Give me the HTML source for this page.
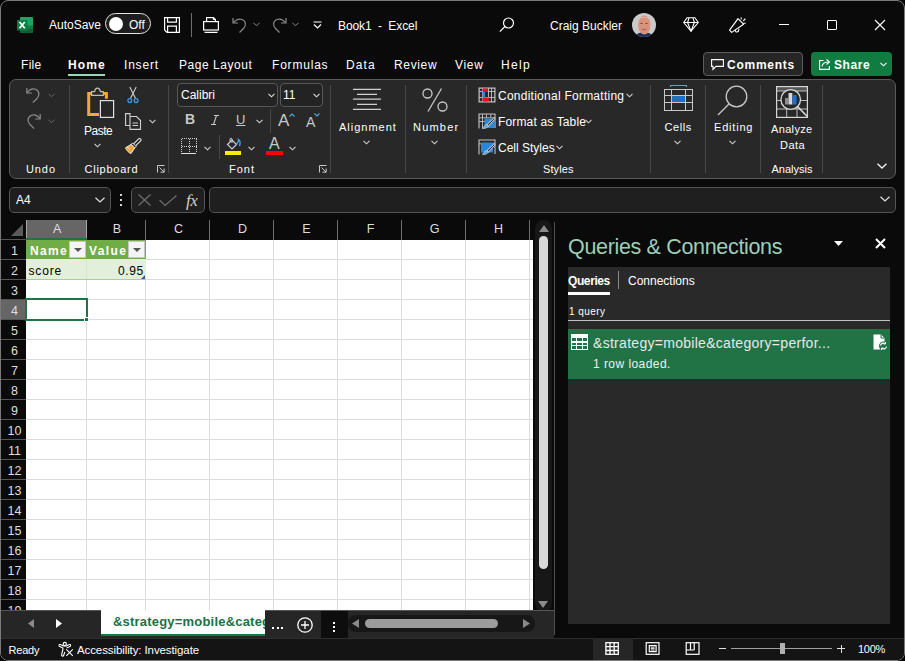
<!DOCTYPE html>
<html><head><meta charset="utf-8">
<style>
*{margin:0;padding:0;box-sizing:border-box}
html,body{width:905px;height:661px;overflow:hidden;background:#000}
body{font-family:"Liberation Sans",sans-serif;color:#fff;position:relative}
.a{position:absolute;white-space:nowrap}
#win{position:absolute;left:0;top:0;width:905px;height:661px;background:#0a0a0a;border:1px solid #7a7a7a;border-radius:8px;overflow:hidden}
.t12{font-size:12px}
.t11{font-size:11px}
.sep{top:85px;width:1px;height:88px;background:#484848}
.hdr{font-size:12.5px;color:#dedede;text-align:center}
.flt{width:17px;height:17px;background:#f4f4f4;border:1px solid #c6c6c6}
.flt::after{content:"";position:absolute;left:4px;top:6px;border-left:4px solid transparent;border-right:4px solid transparent;border-top:4px solid #555}
svg{position:absolute;overflow:visible}
</style></head><body>
<div id="win"><div id="in" style="position:absolute;left:-1px;top:-1px;width:905px;height:661px">
<!-- TITLE BAR -->
<svg style="left:17px;top:17px" width="16" height="16" viewBox="0 0 16 16">
  <rect x="3" y="0" width="13" height="16" rx="1" fill="#21a366"/>
  <rect x="3" y="8.5" width="13" height="7.5" fill="#107c41"/>
  <rect x="3" y="12" width="13" height="4" fill="#185c37"/>
  <rect x="0" y="3" width="10.5" height="10.5" rx="0.8" fill="#107c41"/>
  <path d="M2.5 5 L7.8 11.3 M7.8 5 L2.5 11.3" stroke="#fff" stroke-width="1.7"/>
</svg>
<div class="a t12" style="left:49px;top:18px;color:#fff">AutoSave</div>
<div class="a" style="left:105px;top:13px;width:46px;height:21px;border:1.5px solid #e6e6e6;border-radius:11px;background:#1e1e1e"></div>
<div class="a" style="left:109px;top:17px;width:14px;height:14px;border-radius:50%;background:#fff"></div>
<div class="a t12" style="left:129px;top:18px">Off</div>

<!-- save icon -->
<svg style="left:164px;top:17px" width="16" height="16" viewBox="0 0 16 16" fill="none" stroke="#fff" stroke-width="1.2">
  <path d="M0.6 0.6 H15.4 V15.4 H3 L0.6 13 Z"/>
  <path d="M3.6 0.6 V5.2 H12.4 V0.6"/>
  <path d="M3.6 15.4 V9.2 H12.4 V15.4"/>
</svg>
<div class="a" style="left:191px;top:13px;width:1px;height:24px;background:#6e6e6e"></div>
<!-- open/print icon -->
<svg style="left:203px;top:17px" width="16" height="16" viewBox="0 0 16 16" fill="none" stroke="#fff" stroke-width="1.2">
  <path d="M3.6 4.6 V0.6 H10.5 L12.4 2.5 V4.6"/>
  <path d="M10.5 0.6 V2.5 H12.4"/>
  <rect x="0.6" y="4.6" width="14.8" height="8.4"/>
  <path d="M1.5 15.4 H14.5"/>
</svg>
<!-- undo -->
<svg style="left:232px;top:17px" width="16" height="16" viewBox="0 0 16 16" fill="none" stroke="#8a8a8a" stroke-width="1.2">
  <path d="M1 1 V6 H6"/><path d="M1.3 5.7 C4 2.5 7 1.5 10 2.5 C14 4 14.5 8.5 11.5 11.5 L7.5 15.5"/>
</svg>
<svg style="left:253px;top:22px" width="7" height="5" viewBox="0 0 7 5" fill="none" stroke="#8a8a8a" stroke-width="1"><path d="M0.5 0.8 L3.5 3.8 L6.5 0.8"/></svg>
<!-- redo -->
<svg style="left:271px;top:17px" width="16" height="16" viewBox="0 0 16 16" fill="none" stroke="#8a8a8a" stroke-width="1.2">
  <path d="M15 1 V6 H10"/><path d="M14.7 5.7 C12 2.5 9 1.5 6 2.5 C2 4 1.5 8.5 4.5 11.5 L8.5 15.5"/>
</svg>
<svg style="left:292px;top:22px" width="7" height="5" viewBox="0 0 7 5" fill="none" stroke="#8a8a8a" stroke-width="1"><path d="M0.5 0.8 L3.5 3.8 L6.5 0.8"/></svg>
<!-- customize QAT -->
<svg style="left:313px;top:21px" width="9" height="8" viewBox="0 0 9 8" fill="none" stroke="#fff" stroke-width="1.2"><path d="M0.5 1 H8.5"/><path d="M1 3.5 L4.5 7 L8 3.5"/></svg>
<div class="a t12" style="left:338px;top:19px;letter-spacing:-0.1px">Book1&nbsp; - &nbsp;Excel</div>
<!-- search -->
<svg style="left:499px;top:17px" width="16" height="16" viewBox="0 0 16 16" fill="none" stroke="#fff" stroke-width="1.2">
  <circle cx="9.5" cy="6" r="5"/><path d="M6 9.5 L0.8 14.7"/>
</svg>
<div class="a t12" style="left:550px;top:19px">Craig Buckler</div>
<!-- avatar -->
<svg style="left:632px;top:13px" width="24" height="24" viewBox="0 0 24 24">
  <defs><clipPath id="av"><circle cx="12" cy="12" r="12"/></clipPath></defs>
  <g clip-path="url(#av)">
  <rect width="24" height="24" fill="#c9c9c9"/>
  <path d="M3 24 C5 20 8 19.5 12 19.5 C16 19.5 19 20 21 24 Z" fill="#1c2a5a"/>
  <ellipse cx="12.3" cy="12" rx="6.2" ry="9.5" fill="#d8937f"/>
  <path d="M7 7 C8 3.5 16 3.5 18 7" stroke="#e8b5a5" stroke-width="1" fill="none"/>
  <path d="M8.5 10.5 h2 M13.5 10.5 h2" stroke="#7a3a30" stroke-width="1"/>
  <path d="M10 16 C11 17 13.5 17 14.5 16" stroke="#9a4a40" stroke-width="0.8" fill="none"/>
  </g>
</svg>
<!-- diamond -->
<svg style="left:683px;top:17px" width="16" height="15" viewBox="0 0 16 15" fill="none" stroke="#fff" stroke-width="1.1" stroke-linejoin="round">
  <path d="M4 0.8 H12 L15.3 5.5 L8 14.2 L0.7 5.5 Z"/>
  <path d="M0.7 5.5 H15.3"/>
  <path d="M6 0.8 L4.6 5.5 L8 14.2 L11.4 5.5 L10 0.8"/>
</svg>
<!-- megaphone -->
<svg style="left:729px;top:17px" width="17" height="17" viewBox="0 0 17 17" fill="none" stroke="#fff" stroke-width="1.15" stroke-linejoin="round" stroke-linecap="round">
  <path d="M9 1.6 L14.6 7.2 L2.6 15.4 L0.6 13.2 Z"/>
  <path d="M6.2 13.3 C6.3 15.6 9.6 15.8 10 12.2"/>
  <path d="M12.2 0.8 V2 M14.6 3.6 L16 2 M14.8 6.2 H16.2"/>
</svg>
<!-- window controls -->
<div class="a" style="left:779px;top:24px;width:10px;height:1px;background:#fff"></div>
<div class="a" style="left:827px;top:20px;width:10px;height:10px;border:1px solid #fff;border-radius:1px"></div>
<svg style="left:875px;top:20px" width="10" height="10" viewBox="0 0 10 10" fill="none" stroke="#fff" stroke-width="1.1"><path d="M0 0 L10 10 M10 0 L0 10"/></svg>

<!-- MENU TABS -->
<div class="a t12" style="left:21px;top:58px;letter-spacing:0.3px">File</div>
<div class="a t12" style="left:68px;top:58px;font-weight:bold;letter-spacing:1.1px">Home</div>
<div class="a" style="left:68px;top:74px;width:37px;height:2px;background:#9ad8b3"></div>
<div class="a t12" style="left:124px;top:58px;letter-spacing:0.8px">Insert</div>
<div class="a t12" style="left:179px;top:58px;letter-spacing:0.55px">Page Layout</div>
<div class="a t12" style="left:272px;top:58px;letter-spacing:0.8px">Formulas</div>
<div class="a t12" style="left:346px;top:58px;letter-spacing:1.1px">Data</div>
<div class="a t12" style="left:394px;top:58px;letter-spacing:0.65px">Review</div>
<div class="a t12" style="left:455px;top:58px;letter-spacing:0.7px">View</div>
<div class="a t12" style="left:501px;top:58px;letter-spacing:1.3px">Help</div>
<!-- comments -->
<div class="a" style="left:703px;top:52px;width:100px;height:24px;border:1px solid #5c5c5c;border-radius:4px;background:#262626"></div>
<svg style="left:711px;top:59px" width="13" height="11" viewBox="0 0 13 11" fill="none" stroke="#fff" stroke-width="1.1"><path d="M0.6 0.6 H12.4 V7.4 H5 L2 10.4 V7.4 H0.6 Z"/></svg>
<div class="a t12" style="left:727px;top:58px;font-weight:bold;letter-spacing:0.75px">Comments</div>
<!-- share -->
<div class="a" style="left:811px;top:52px;width:81px;height:24px;border-radius:4px;background:#107c41"></div>
<svg style="left:819px;top:58px" width="12" height="12" viewBox="0 0 12 12" fill="none" stroke="#fff" stroke-width="1.1"><path d="M4.5 2.5 H0.6 V11.4 H10.4 V8"/><path d="M3 8.5 C3.5 5 6 4 9.5 4"/><path d="M7.5 1.5 L10.5 4 L7.5 6.5"/></svg>
<div class="a t12" style="left:834px;top:58px;font-weight:bold;letter-spacing:0.6px">Share</div>
<svg style="left:880px;top:62px" width="7" height="5" viewBox="0 0 7 5" fill="none" stroke="#fff" stroke-width="1.1"><path d="M0.5 0.8 L3.5 3.8 L6.5 0.8"/></svg>

<!-- RIBBON -->
<div class="a" style="left:9px;top:79px;width:887px;height:100px;border:1px solid #5a5a5a;border-radius:7px;background:#282828"></div>
<!-- separators -->
<div class="a sep" style="left:69px"></div>
<div class="a sep" style="left:168px"></div>
<div class="a sep" style="left:330px"></div>
<div class="a sep" style="left:405px"></div>
<div class="a sep" style="left:466px"></div>
<div class="a sep" style="left:650px"></div>
<div class="a sep" style="left:705px"></div>
<div class="a sep" style="left:760px"></div>
<div class="a sep" style="left:822px"></div>
<!-- group labels -->
<div class="a t11" style="left:26px;top:163px;letter-spacing:0.9px">Undo</div>
<div class="a t11" style="left:84.5px;top:163px;letter-spacing:0.75px">Clipboard</div>
<div class="a t11" style="left:229px;top:163px;letter-spacing:1px">Font</div>
<div class="a t11" style="left:543px;top:163px;letter-spacing:0.1px">Styles</div>
<div class="a t11" style="left:771.5px;top:163px">Analysis</div>

<!-- undo group -->
<svg style="left:26px;top:87px" width="15" height="16" viewBox="0 0 15 16" fill="none" stroke="#8c8c8c" stroke-width="1.2">
  <path d="M0.8 1 V6 H5.8"/><path d="M1.1 5.7 C3.5 2.5 6.5 1.3 9.5 2.3 C13.5 3.8 14 8.5 11 11.5 L6.8 15.6"/>
</svg>
<svg style="left:48px;top:93px" width="7" height="5" viewBox="0 0 7 5" fill="none" stroke="#6a6a6a" stroke-width="1"><path d="M0.5 0.8 L3.5 3.8 L6.5 0.8"/></svg>
<svg style="left:26px;top:113px" width="15" height="16" viewBox="0 0 15 16" fill="none" stroke="#8c8c8c" stroke-width="1.2">
  <path d="M14.2 1 V6 H9.2"/><path d="M13.9 5.7 C11.5 2.5 8.5 1.3 5.5 2.3 C1.5 3.8 1 8.5 4 11.5 L8.2 15.6"/>
</svg>
<svg style="left:48px;top:119px" width="7" height="5" viewBox="0 0 7 5" fill="none" stroke="#6a6a6a" stroke-width="1"><path d="M0.5 0.8 L3.5 3.8 L6.5 0.8"/></svg>
<!-- clipboard -->
<svg style="left:86px;top:87px" width="30" height="32" viewBox="0 0 30 32" fill="none">
  <path d="M13 27.4 H2.7 V6.5 H20.4 V11.7" stroke="#f2a73b" stroke-width="3"/>
  <path d="M5.6 8.3 V4.6 H8.6 C9 2 10 1.2 11.5 1.2 C13 1.2 14 2 14.4 4.6 H17.3 V8.3 Z" stroke="#bdbdbd" stroke-width="1.2" fill="#282828"/>
  <rect x="14.4" y="13.6" width="13.2" height="16.8" stroke="#e0e0e0" stroke-width="1.2" fill="#282828"/>
</svg>
<div class="a t11" style="left:84px;top:124px;font-size:12px;letter-spacing:-0.5px">Paste</div>
<svg style="left:94px;top:143px" width="7" height="5" viewBox="0 0 7 5" fill="none" stroke="#d0d0d0" stroke-width="1.1"><path d="M0.5 0.8 L3.5 3.8 L6.5 0.8"/></svg>
<!-- scissors -->
<svg style="left:127px;top:86px" width="12" height="17" viewBox="0 0 12 17" fill="none" stroke-width="1.1">
  <path d="M2.8 1 L8.6 12.5 M9.2 1 L3.4 12.5" stroke="#d0d0d0"/>
  <circle cx="2.8" cy="14.6" r="1.9" stroke="#3a9be0" stroke-width="1.3"/><circle cx="9.1" cy="14.6" r="1.9" stroke="#3a9be0" stroke-width="1.3"/>
</svg>
<!-- copy -->
<svg style="left:125px;top:113px" width="17" height="17" viewBox="0 0 17 17" fill="none" stroke="#d0d0d0" stroke-width="1.1">
  <path d="M5 3 V0.6 H0.6 V12.5 H5"/>
  <path d="M5 3.5 H11.5 L15.5 7.5 V16.4 H5 Z"/>
  <path d="M7.5 10 H13 M7.5 12.5 H13"/>
</svg>
<svg style="left:149px;top:119px" width="7" height="5" viewBox="0 0 7 5" fill="none" stroke="#d0d0d0" stroke-width="1.1"><path d="M0.5 0.8 L3.5 3.8 L6.5 0.8"/></svg>
<!-- format painter -->
<svg style="left:124px;top:138px" width="18" height="17" viewBox="0 0 18 17" fill="none" stroke-linejoin="round">
  <path d="M1.5 9.8 L7.2 6.3 L10.8 9.9 L7 15.6 C5 15 2.5 12.5 1.5 9.8 Z" fill="#f0a33a"/>
  <path d="M1.5 9.8 L7.2 6.3 L10.8 9.9 L7 15.6 C5 15 2.5 12.5 1.5 9.8 Z M3.5 9.5 L5.5 11" stroke="#e8e8e8" stroke-width="1"/>
  <path d="M7.2 6.3 L8.6 4.9 L12.2 8.5 L10.8 9.9" stroke="#e8e8e8" stroke-width="1"/>
  <path d="M9.6 5.9 L14.6 0.9 C15.2 0.3 16 0.3 16.6 0.9 C17.2 1.5 17.2 2.3 16.6 2.9 L11.6 7.9" stroke="#e8e8e8" stroke-width="1.1"/>
</svg>

<!-- font group -->
<div class="a" style="left:177px;top:83px;width:101px;height:24px;border:1px solid #575757;border-radius:4px;background:#232323"></div>
<div class="a t12" style="left:181px;top:88px">Calibri</div>
<svg style="left:268px;top:93px" width="7" height="5" viewBox="0 0 7 5" fill="none" stroke="#e0e0e0" stroke-width="1.1"><path d="M0.5 0.8 L3.5 3.8 L6.5 0.8"/></svg>
<div class="a" style="left:280px;top:83px;width:43px;height:24px;border:1px solid #575757;border-radius:4px;background:#232323"></div>
<div class="a t12" style="left:283px;top:88px">11</div>
<svg style="left:313px;top:93px" width="7" height="5" viewBox="0 0 7 5" fill="none" stroke="#e0e0e0" stroke-width="1.1"><path d="M0.5 0.8 L3.5 3.8 L6.5 0.8"/></svg>
<div class="a" style="left:185px;top:111px;font-size:14px;font-weight:bold;color:#c8c8c8">B</div>
<svg style="left:211px;top:115px" width="8" height="10" viewBox="0 0 8 10" fill="none" stroke="#c8c8c8" stroke-width="1.1"><path d="M3 0.5 H8 M0 9.5 H5 M5.5 0.5 L2.5 9.5"/></svg>
<div class="a" style="left:236px;top:112px;font-size:13px;color:#c8c8c8;text-decoration:underline">U</div>
<svg style="left:256px;top:119px" width="7" height="5" viewBox="0 0 7 5" fill="none" stroke="#d0d0d0" stroke-width="1.1"><path d="M0.5 0.8 L3.5 3.8 L6.5 0.8"/></svg>
<div class="a" style="left:270px;top:109px;width:1px;height:24px;background:#484848"></div>
<div class="a" style="left:278px;top:111px;font-size:17px;color:#c8c8c8">A</div>
<svg style="left:289px;top:113px" width="6" height="4" viewBox="0 0 6 4" fill="none" stroke="#4aa8e8" stroke-width="1.1"><path d="M0.5 3.5 L3 1 L5.5 3.5"/></svg>
<div class="a" style="left:306px;top:114px;font-size:14px;color:#c8c8c8">A</div>
<svg style="left:314px;top:113px" width="6" height="4" viewBox="0 0 6 4" fill="none" stroke="#4aa8e8" stroke-width="1.1"><path d="M0.5 0.5 L3 3 L5.5 0.5"/></svg>
<!-- borders icon -->
<svg style="left:181px;top:138px" width="16" height="16" viewBox="0 0 16 16" fill="none" stroke="#d0d0d0" stroke-width="1" stroke-dasharray="1 1" shape-rendering="crispEdges">
  <path d="M0.5 0.5 H15.5 M0.5 0.5 V15 M15.5 0.5 V15 M8 0.5 V15 M0.5 8 H15.5"/>
</svg>
<div class="a" style="left:181px;top:153px;width:15px;height:1px;background:#e0e0e0"></div>
<svg style="left:204px;top:146px" width="7" height="5" viewBox="0 0 7 5" fill="none" stroke="#d0d0d0" stroke-width="1.1"><path d="M0.5 0.8 L3.5 3.8 L6.5 0.8"/></svg>
<div class="a" style="left:219px;top:135px;width:1px;height:24px;background:#484848"></div>
<!-- fill -->
<svg style="left:225px;top:138px" width="17" height="13" viewBox="0 0 17 13" fill="none">
  <path d="M2.5 6.5 L7 2 L11.5 6.5 L7 11 Z" stroke="#d0d0d0" stroke-width="1.1"/>
  <path d="M5 3.5 V1 C5 0 7 0 7 1 V5" stroke="#d0d0d0" stroke-width="1"/>
  <path d="M11.5 6.5 C13 4 14 3 13.5 1.5 C15 2.5 15.5 5 14.5 8" stroke="#4aa8e8" stroke-width="1.3"/>
</svg>
<div class="a" style="left:225px;top:151px;width:16px;height:4px;background:#ffeb00"></div>
<svg style="left:248px;top:146px" width="7" height="5" viewBox="0 0 7 5" fill="none" stroke="#d0d0d0" stroke-width="1.1"><path d="M0.5 0.8 L3.5 3.8 L6.5 0.8"/></svg>
<div class="a" style="left:269px;top:135px;font-size:16px;color:#c8c8c8">A</div>
<div class="a" style="left:266px;top:151px;width:17px;height:4px;background:#ff0000"></div>
<svg style="left:289px;top:146px" width="7" height="5" viewBox="0 0 7 5" fill="none" stroke="#d0d0d0" stroke-width="1.1"><path d="M0.5 0.8 L3.5 3.8 L6.5 0.8"/></svg>
<!-- dialog launchers -->
<svg style="left:157px;top:165px" width="8" height="8" viewBox="0 0 8 8" fill="none" stroke="#c8c8c8" stroke-width="1"><path d="M0.5 7.5 V0.5 H7.5"/><path d="M2.5 2.5 L7 7 M3.5 7.2 H7.2 V3.5"/></svg>
<svg style="left:319px;top:165px" width="8" height="8" viewBox="0 0 8 8" fill="none" stroke="#c8c8c8" stroke-width="1"><path d="M0.5 7.5 V0.5 H7.5"/><path d="M2.5 2.5 L7 7 M3.5 7.2 H7.2 V3.5"/></svg>
<!-- alignment -->
<svg style="left:353px;top:88px" width="28" height="23" viewBox="0 0 28 23" stroke="#d0d0d0" stroke-width="1.2">
  <path d="M0 1.3 H28 M4 6.4 H24 M0 11.2 H28 M4 16.3 H24 M0 21.4 H28"/>
</svg>
<div class="a t11" style="left:339px;top:121px;letter-spacing:1px">Alignment</div>
<svg style="left:363px;top:140px" width="7" height="5" viewBox="0 0 7 5" fill="none" stroke="#d0d0d0" stroke-width="1.1"><path d="M0.5 0.8 L3.5 3.8 L6.5 0.8"/></svg>
<!-- number -->
<svg style="left:422px;top:88px" width="26" height="24" viewBox="0 0 26 24" fill="none" stroke="#c8c8c8" stroke-width="1.3">
  <circle cx="5.5" cy="5.5" r="4.5"/><circle cx="20.5" cy="18.5" r="4.5"/><path d="M19.5 0.5 L6 23.5"/>
</svg>
<div class="a t11" style="left:413px;top:121px;letter-spacing:1.2px">Number</div>
<svg style="left:431px;top:140px" width="7" height="5" viewBox="0 0 7 5" fill="none" stroke="#d0d0d0" stroke-width="1.1"><path d="M0.5 0.8 L3.5 3.8 L6.5 0.8"/></svg>

<!-- styles group -->
<svg style="left:478px;top:87px" width="18" height="16" viewBox="0 0 18 16">
  <rect x="1.1" y="1.1" width="15.8" height="13.8" fill="none" stroke="#c4c4c4" stroke-width="1.2"/>
  <path d="M4.5 1 V15 M10.5 1 V15 M13.5 1 V15 M1 4.5 H17 M1 10.5 H17" stroke="#c4c4c4" stroke-width="0.9" fill="none"/>
  <rect x="4.5" y="1.5" width="5.5" height="3.5" fill="#e81123"/>
  <rect x="4.5" y="5" width="2.5" height="5.5" fill="#2b88d8"/>
  <rect x="4.5" y="10.5" width="6.5" height="4" fill="#e81123"/>
</svg>
<div class="a t12" style="left:498px;top:89px;letter-spacing:0.25px">Conditional Formatting</div>
<svg style="left:626px;top:93px" width="7" height="5" viewBox="0 0 7 5" fill="none" stroke="#d0d0d0" stroke-width="1.1"><path d="M0.5 0.8 L3.5 3.8 L6.5 0.8"/></svg>
<svg style="left:478px;top:113px" width="18" height="16" viewBox="0 0 18 16" fill="none">
  <path d="M1 15.5 V1 H17 V15" stroke="#c4c4c4" stroke-width="1.1"/>
  <path d="M1 4.8 H17 M1 8.5 H7 M4.5 1 V15.5 M8.5 1 V5 M12.8 1 V5" stroke="#c4c4c4" stroke-width="0.9"/>
  <rect x="6.5" y="5.5" width="10" height="9.5" fill="#2b88d8"/>
  <path d="M15.6 5.2 C16.4 4.6 17.3 5.3 16.8 6.2 L10.5 13 L9 11.6 Z" fill="#282828" stroke="#e6e6e6" stroke-width="1"/>
  <path d="M9 11.6 L10.5 13 C9.5 15 7 15.5 4.5 15.5 C5.5 14.5 6 12 9 11.6 Z" fill="#4aa8e8" stroke="#e6e6e6" stroke-width="0.6"/>
</svg>
<div class="a t12" style="left:498px;top:115px;letter-spacing:0.15px">Format as Table</div>
<svg style="left:585px;top:119px" width="7" height="5" viewBox="0 0 7 5" fill="none" stroke="#d0d0d0" stroke-width="1.1"><path d="M0.5 0.8 L3.5 3.8 L6.5 0.8"/></svg>
<svg style="left:478px;top:139px" width="18" height="16" viewBox="0 0 18 16" fill="none">
  <path d="M1 15.5 V1 H17 V15" stroke="#c4c4c4" stroke-width="1.1"/>
  <path d="M1 4.8 H17" stroke="#c4c4c4" stroke-width="0.9"/>
  <rect x="3" y="3.5" width="12" height="10" fill="#2b88d8"/>
  <path d="M15.6 5.2 C16.4 4.6 17.3 5.3 16.8 6.2 L10.5 13 L9 11.6 Z" fill="#282828" stroke="#e6e6e6" stroke-width="1"/>
  <path d="M9 11.6 L10.5 13 C9.5 15 7 15.5 4.5 15.5 C5.5 14.5 6 12 9 11.6 Z" fill="#4aa8e8" stroke="#e6e6e6" stroke-width="0.6"/>
</svg>
<div class="a t12" style="left:498px;top:141px;letter-spacing:0px">Cell Styles</div>
<svg style="left:556px;top:145px" width="7" height="5" viewBox="0 0 7 5" fill="none" stroke="#d0d0d0" stroke-width="1.1"><path d="M0.5 0.8 L3.5 3.8 L6.5 0.8"/></svg>
<!-- cells -->
<svg style="left:664px;top:85px" width="29" height="26" viewBox="0 0 29 26" shape-rendering="crispEdges">
  <path d="M6 0.5 H22 M6 0 V2 M22 0 V2" stroke="#4aa8e8" stroke-width="1" fill="none"/>
  <rect x="8" y="10" width="14" height="7" fill="#1f6fc5"/>
  <rect x="0.5" y="4.5" width="28" height="21" fill="none" stroke="#c8c8c8" stroke-width="1.2"/>
  <path d="M7.5 4.5 V25.5 M21.5 4.5 V25.5 M0.5 10 H28.5 M0.5 17.5 H28.5" stroke="#c8c8c8" stroke-width="1" fill="none"/>
</svg>
<div class="a t11" style="left:664.5px;top:121px;letter-spacing:0.6px">Cells</div>
<svg style="left:674px;top:140px" width="7" height="5" viewBox="0 0 7 5" fill="none" stroke="#d0d0d0" stroke-width="1.1"><path d="M0.5 0.8 L3.5 3.8 L6.5 0.8"/></svg>
<!-- editing -->
<svg style="left:717px;top:85px" width="32" height="31" viewBox="0 0 32 31" fill="none" stroke="#c8c8c8" stroke-width="1.3">
  <circle cx="19.5" cy="11.5" r="10.3"/><path d="M12.2 18.8 L1 30"/>
</svg>
<div class="a t11" style="left:714px;top:121px;letter-spacing:0.8px">Editing</div>
<svg style="left:729px;top:140px" width="7" height="5" viewBox="0 0 7 5" fill="none" stroke="#d0d0d0" stroke-width="1.1"><path d="M0.5 0.8 L3.5 3.8 L6.5 0.8"/></svg>
<!-- analyze data -->
<svg style="left:776px;top:86px" width="33" height="32" viewBox="0 0 33 32">
  <rect x="1" y="1" width="30" height="4" fill="#555"/>
  <path d="M0.6 5 H31.4 M0.6 14.5 H31.4 M0.6 23 H31.4 M10.7 5 V31.4 M21 5 V31.4" stroke="#bdbdbd" stroke-width="1" fill="none"/>
  <rect x="0.6" y="0.6" width="30.8" height="30.8" fill="none" stroke="#d6d6d6" stroke-width="1.2"/>
  <circle cx="14.7" cy="13.5" r="9.8" fill="#282828" stroke="#dadada" stroke-width="1.3"/>
  <path d="M21.6 20.6 L31.8 31" stroke="#dadada" stroke-width="1.5"/>
  <rect x="9" y="12" width="3.2" height="6.5" fill="#8e8e8e"/>
  <rect x="12.5" y="7" width="3.8" height="11.5" fill="#d8d8d8"/>
  <rect x="16.5" y="9" width="4" height="9.5" fill="#1f6fd0"/>
</svg>
<div class="a t11" style="left:771px;top:123px;letter-spacing:0.35px">Analyze</div>
<div class="a t11" style="left:780px;top:139px;letter-spacing:0.5px">Data</div>
<svg style="left:877px;top:163px" width="10" height="6" viewBox="0 0 10 6" fill="none" stroke="#f0f0f0" stroke-width="1.4"><path d="M0.5 0.8 L5 5 L9.5 0.8"/></svg>

<!-- FORMULA BAR -->
<div class="a" style="left:9px;top:187px;width:102px;height:26px;border:1px solid #555;border-radius:5px;background:#1f1f1f"></div>
<div class="a t12" style="left:16px;top:193px">A4</div>
<svg style="left:95px;top:197px" width="10" height="6" viewBox="0 0 10 6" fill="none" stroke="#e0e0e0" stroke-width="1.2"><path d="M0.5 0.8 L5 5 L9.5 0.8"/></svg>
<div class="a" style="left:120px;top:194px;width:2px;height:2px;background:#d0d0d0"></div>
<div class="a" style="left:120px;top:199px;width:2px;height:2px;background:#d0d0d0"></div>
<div class="a" style="left:120px;top:204px;width:2px;height:2px;background:#d0d0d0"></div>
<div class="a" style="left:131px;top:187px;width:74px;height:26px;border:1px solid #555;border-radius:5px;background:#1f1f1f"></div>
<svg style="left:138px;top:194px" width="13" height="12" viewBox="0 0 13 12" fill="none" stroke="#6e6e6e" stroke-width="1.2"><path d="M0.5 0.5 L12.5 11.5 M12.5 0.5 L0.5 11.5"/></svg>
<svg style="left:159px;top:195px" width="18" height="11" viewBox="0 0 18 11" fill="none" stroke="#6e6e6e" stroke-width="1.2"><path d="M0.5 5 L6 10.5 L17.5 0.5"/></svg>
<div class="a" style="left:186px;top:191px;font-family:'Liberation Serif',serif;font-style:italic;font-size:17px;color:#d0d0d0;letter-spacing:-0.5px">fx</div>
<div class="a" style="left:209px;top:187px;width:687px;height:26px;border:1px solid #555;border-radius:5px;background:#1f1f1f"></div>
<svg style="left:880px;top:196px" width="10" height="6" viewBox="0 0 10 6" fill="none" stroke="#e0e0e0" stroke-width="1.2"><path d="M0.5 0.8 L5 5 L9.5 0.8"/></svg>

<!-- GRID -->
<div class="a" style="left:26px;top:240px;width:507px;height:370px;background:#fff"></div>
<div class="a" style="left:26px;top:220px;width:61px;height:18px;background:#666;border-left:1px solid #a8a8a8;border-right:1px solid #a8a8a8"></div>
<div class="a" style="left:26px;top:238px;width:61px;height:2px;background:#217346"></div>
<div class="a" style="left:1px;top:300px;width:25px;height:19px;background:#666"></div>
<svg style="left:11px;top:224px" width="12" height="12" viewBox="0 0 12 12"><path d="M12 0 V12 H0 Z" fill="#5a5a5a"/></svg>
<svg style="left:0;top:0" width="905" height="661" viewBox="0 0 905 661" shape-rendering="crispEdges"><path d="M86.5 240 V610 M145.5 240 V610 M209.5 240 V610 M273.5 240 V610 M337.5 240 V610 M401.5 240 V610 M465.5 240 V610 M529.5 240 V610 M26 259.5 H533 M26 279.5 H533 M26 299.5 H533 M26 319.5 H533 M26 339.5 H533 M26 359.5 H533 M26 379.5 H533 M26 399.5 H533 M26 419.5 H533 M26 439.5 H533 M26 459.5 H533 M26 479.5 H533 M26 499.5 H533 M26 519.5 H533 M26 539.5 H533 M26 559.5 H533 M26 579.5 H533 M26 599.5 H533" stroke="#dcdcdc" stroke-width="1" fill="none"/><path d="M145.5 220 V240 M209.5 220 V240 M273.5 220 V240 M337.5 220 V240 M401.5 220 V240 M465.5 220 V240 M529.5 220 V240" stroke="#6e6e6e" stroke-width="1" fill="none"/><path d="M1 239.5 H26 M1 259.5 H26 M1 279.5 H26 M1 299.5 H26 M1 319.5 H26 M1 339.5 H26 M1 359.5 H26 M1 379.5 H26 M1 399.5 H26 M1 419.5 H26 M1 439.5 H26 M1 459.5 H26 M1 479.5 H26 M1 499.5 H26 M1 519.5 H26 M1 539.5 H26 M1 559.5 H26 M1 579.5 H26 M1 599.5 H26" stroke="#555555" stroke-width="1" fill="none"/></svg>
<div class="a hdr" style="left:37.25px;top:222px;width:40px">A</div>
<div class="a hdr" style="left:97px;top:222px;width:40px">B</div>
<div class="a hdr" style="left:158.5px;top:222px;width:40px">C</div>
<div class="a hdr" style="left:222.5px;top:222px;width:40px">D</div>
<div class="a hdr" style="left:286.5px;top:222px;width:40px">E</div>
<div class="a hdr" style="left:350.5px;top:222px;width:40px">F</div>
<div class="a hdr" style="left:414.5px;top:222px;width:40px">G</div>
<div class="a hdr" style="left:478.5px;top:222px;width:40px">H</div>
<div class="a hdr" style="left:2px;top:244px;width:25px">1</div>
<div class="a hdr" style="left:2px;top:264px;width:25px">2</div>
<div class="a hdr" style="left:2px;top:284px;width:25px">3</div>
<div class="a hdr" style="left:2px;top:304px;width:25px">4</div>
<div class="a hdr" style="left:2px;top:324px;width:25px">5</div>
<div class="a hdr" style="left:2px;top:344px;width:25px">6</div>
<div class="a hdr" style="left:2px;top:364px;width:25px">7</div>
<div class="a hdr" style="left:2px;top:384px;width:25px">8</div>
<div class="a hdr" style="left:2px;top:404px;width:25px">9</div>
<div class="a hdr" style="left:2px;top:424px;width:25px">10</div>
<div class="a hdr" style="left:2px;top:444px;width:25px">11</div>
<div class="a hdr" style="left:2px;top:464px;width:25px">12</div>
<div class="a hdr" style="left:2px;top:484px;width:25px">13</div>
<div class="a hdr" style="left:2px;top:504px;width:25px">14</div>
<div class="a hdr" style="left:2px;top:524px;width:25px">15</div>
<div class="a hdr" style="left:2px;top:544px;width:25px">16</div>
<div class="a hdr" style="left:2px;top:564px;width:25px">17</div>
<div class="a hdr" style="left:2px;top:584px;width:25px">18</div>
<div class="a hdr" style="left:2px;top:604px;width:25px">19</div>

<!-- TABLE -->
<div class="a" style="left:26px;top:240px;width:120px;height:19px;background:#70ad47"></div>
<div class="a" style="left:26px;top:259px;width:120px;height:21px;background:#e2efda;border-bottom:1px solid #a9d08e"></div>
<div class="a" style="left:86px;top:259px;width:1px;height:20px;background:#d8e6cf"></div>
<div class="a" style="left:30px;top:244px;font-size:12px;font-weight:bold;color:#fff;letter-spacing:1.35px">Name</div>
<div class="a flt" style="left:69px;top:241px"></div>
<div class="a" style="left:89px;top:244px;font-size:12px;font-weight:bold;color:#fff;letter-spacing:1.4px">Value</div>
<div class="a flt" style="left:128px;top:241px"></div>
<div class="a" style="left:28.5px;top:264px;font-size:12px;color:#000;letter-spacing:0.85px">score</div>
<div class="a" style="left:118px;top:264px;font-size:12px;color:#000;letter-spacing:0.6px">0.95</div>
<svg style="left:141px;top:275px" width="4" height="4" viewBox="0 0 4 4"><path d="M4 0 V4 H0 Z" fill="#2f5fa8"/></svg>
<!-- selection -->
<div class="a" style="left:25px;top:298px;width:63px;height:23px;border:2px solid #217346"></div>
<div class="a" style="left:84px;top:317px;width:5px;height:5px;background:#217346;border:1px solid #fff"></div>

<!-- V SCROLLBAR -->
<div class="a" style="left:535px;top:220px;width:17px;height:392px;background:#171717;border-radius:9px"></div>
<svg style="left:539px;top:225px" width="10" height="7" viewBox="0 0 10 7"><path d="M5 0 L10 7 H0 Z" fill="#8a8a8a"/></svg>
<div class="a" style="left:539px;top:236px;width:9px;height:333px;background:#d8d8d8;border-radius:5px"></div>
<svg style="left:538px;top:601px" width="10" height="7" viewBox="0 0 10 7"><path d="M0 0 H10 L5 7 Z" fill="#8a8a8a"/></svg>
<div class="a" style="left:554px;top:222px;width:1px;height:413px;background:#505050"></div>

<!-- QUERIES PANEL -->
<div class="a" style="left:568px;top:235px;font-size:21.5px;color:#9ccfb3;letter-spacing:-0.33px">Queries &amp; Connections</div>
<svg style="left:834px;top:241px" width="9" height="5" viewBox="0 0 9 5"><path d="M0 0 H9 L4.5 5 Z" fill="#fff"/></svg>
<svg style="left:875px;top:238px" width="11" height="11" viewBox="0 0 11 11" fill="none" stroke="#fff" stroke-width="2"><path d="M1 1 L10 10 M10 1 L1 10"/></svg>
<div class="a" style="left:568px;top:267px;width:322px;height:357px;background:#292929"></div>
<div class="a" style="left:568px;top:274px;font-size:12px;font-weight:bold;color:#fff;letter-spacing:-0.4px">Queries</div>
<div class="a" style="left:568px;top:292px;width:42px;height:3px;background:#fff"></div>
<div class="a" style="left:618px;top:271px;width:1px;height:18px;background:#8a8a8a"></div>
<div class="a" style="left:628px;top:274px;font-size:12px;color:#fff">Connections</div>
<div class="a" style="left:569px;top:306px;font-size:10px;color:#fff;letter-spacing:0.45px">1 query</div>
<div class="a" style="left:568px;top:320px;width:322px;height:1px;background:#c0c0c0"></div>
<div class="a" style="left:568px;top:329px;width:322px;height:50px;background:#217346"></div>
<svg style="left:571px;top:334px" width="17" height="16" viewBox="0 0 17 16" shape-rendering="crispEdges">
  <rect x="0.5" y="0.5" width="16" height="15" fill="#217346" stroke="#fff" stroke-width="1.2"/>
  <rect x="1" y="1" width="15" height="3" fill="#fff"/>
  <path d="M0.5 8 H16.5 M0.5 11.8 H16.5 M5.8 1 V15.5 M11.2 1 V15.5" stroke="#fff" stroke-width="1.2" fill="none"/>
</svg>
<div class="a" style="left:593px;top:335px;font-size:14px;color:#e8e8e8;letter-spacing:0.29px">&amp;strategy=mobile&amp;category=perfor...</div>
<div class="a" style="left:593px;top:357px;font-size:12px;color:#f0f0f0;letter-spacing:0.45px">1 row loaded.</div>
<svg style="left:873px;top:334px" width="15" height="17" viewBox="0 0 15 17">
  <path d="M0.5 0.5 H8 L11.5 4 V15.5 H0.5 Z" fill="#fff"/>
  <path d="M8 0.5 V4 H11.5" fill="none" stroke="#217346" stroke-width="1"/>
  <circle cx="10.5" cy="12" r="4.5" fill="#217346"/>
  <path d="M7.5 11.5 C7.8 9.5 10 8.5 12 9.5 M13.5 12.5 C13.2 14.5 11 15.5 9 14.5" stroke="#fff" stroke-width="1.1" fill="none"/>
  <path d="M12.5 8 V10 H10.5 M8.5 16 V14 H10.5" stroke="#fff" stroke-width="1" fill="none"/>
</svg>

<!-- SHEET TAB BAR -->
<div class="a" style="left:1px;top:610px;width:553px;height:28px;background:#262626;border-top:1px solid #555"></div>
<svg style="left:28px;top:619px" width="6" height="9" viewBox="0 0 6 9"><path d="M6 0 V9 L0 4.5 Z" fill="#8a8a8a"/></svg>
<svg style="left:56px;top:619px" width="6" height="9" viewBox="0 0 6 9"><path d="M0 0 V9 L6 4.5 Z" fill="#fff"/></svg>
<div class="a" style="left:101px;top:610px;width:164px;height:26px;background:#fff;border-bottom:2px solid #107c41;overflow:hidden">
  <div class="a" style="left:12px;top:4px;font-size:13px;font-weight:bold;color:#1e7145;letter-spacing:0.2px">&amp;strategy=mobile&amp;category=performance</div>
</div>
<div class="a" style="left:272px;top:627px;width:2px;height:2px;background:#fff"></div>
<div class="a" style="left:276.5px;top:627px;width:2px;height:2px;background:#fff"></div>
<div class="a" style="left:281px;top:627px;width:2px;height:2px;background:#fff"></div>
<svg style="left:297px;top:617px" width="16" height="16" viewBox="0 0 16 16" fill="none" stroke="#fff" stroke-width="1.3"><circle cx="8" cy="8" r="7.2"/><path d="M8 4 V12 M4 8 H12"/></svg>
<div class="a" style="left:321px;top:611px;width:27px;height:27px;background:#0d0d0d"></div>
<div class="a" style="left:333px;top:622px;width:2px;height:2px;background:#fff"></div>
<div class="a" style="left:333px;top:626px;width:2px;height:2px;background:#fff"></div>
<div class="a" style="left:333px;top:630px;width:2px;height:2px;background:#fff"></div>
<div class="a" style="left:348px;top:615px;width:187px;height:17px;background:#171717;border-radius:8px"></div>
<svg style="left:352px;top:619px" width="7" height="9" viewBox="0 0 7 9"><path d="M7 0 V9 L0 4.5 Z" fill="#8a8a8a"/></svg>
<div class="a" style="left:365px;top:619px;width:133px;height:9px;background:#9c9c9c;border-radius:5px"></div>
<svg style="left:523px;top:619px" width="7" height="9" viewBox="0 0 7 9"><path d="M0 0 V9 L7 4.5 Z" fill="#8a8a8a"/></svg>

<!-- STATUS BAR -->
<div class="a" style="left:1px;top:638px;width:903px;height:22px;background:#141414;border-top:1px solid #2e2e2e"></div>
<div class="a" style="left:8.5px;top:644px;font-size:11px;color:#fff;letter-spacing:-0.2px">Ready</div>
<svg style="left:57px;top:641px" width="17" height="16" viewBox="0 0 17 16" fill="none" stroke="#fff" stroke-width="1.1" stroke-linejoin="round">
  <circle cx="7.8" cy="3" r="1.6"/>
  <path d="M2 4.6 C1.8 3.4 3 3.2 4 3.8 L6.2 5 H9.4 L11.6 3.8 C12.6 3.2 13.8 3.4 13.6 4.6 C13.5 5.2 13 5.5 12.3 5.8 L9.6 7"/>
  <path d="M2 4.6 C2.1 5.2 2.6 5.5 3.3 5.8 L5.9 7 V8.5 L4.6 13.6 C4.4 14.6 5 15.1 5.6 15.1 C6.2 15.1 6.6 14.7 6.8 14 L7.8 11"/>
  <path d="M9.3 8.3 L15.8 14.8 M15.8 8.3 L9.3 14.8"/>
</svg>
<div class="a" style="left:77px;top:644px;font-size:11.5px;color:#fff;letter-spacing:-0.1px">Accessibility: Investigate</div>
<div class="a" style="left:593px;top:638px;width:40px;height:22px;background:#262626"></div>
<svg style="left:605px;top:642px" width="14" height="13" viewBox="0 0 14 13" fill="none" stroke="#fff" stroke-width="1.3"><rect x="0.9" y="0.7" width="12.4" height="11.6"/><path d="M5 0.7 V12.3 M9.2 0.7 V12.3 M0.9 4.6 H13.3 M0.9 8.5 H13.3"/></svg>
<svg style="left:645px;top:642px" width="15" height="13" viewBox="0 0 15 13" fill="none" stroke="#fff" stroke-width="1.2"><rect x="1.2" y="0.7" width="12.8" height="11.6"/><rect x="4.3" y="3.6" width="6.8" height="6"/><path d="M5.8 5.2 H9.6 M5.8 6.6 H9.6 M5.8 8 H9.6" stroke-width="0.9"/></svg>
<svg style="left:685px;top:642px" width="15" height="13" viewBox="0 0 15 13" fill="none" stroke="#fff" stroke-width="1.2"><rect x="1.2" y="0.7" width="12.8" height="11.6"/><path d="M5.5 0.7 V8 M9.2 0.7 V8 M1.2 8 H9.2"/></svg>
<div class="a" style="left:719px;top:648px;width:7px;height:1px;background:#e0e0e0"></div>
<div class="a" style="left:731px;top:648px;width:101px;height:1px;background:#a0a0a0"></div>
<div class="a" style="left:780px;top:643px;width:5px;height:11px;background:#b0b0b0"></div>
<div class="a" style="left:837px;top:648px;width:8px;height:1px;background:#e0e0e0"></div>
<div class="a" style="left:840.5px;top:644.5px;width:1px;height:8px;background:#e0e0e0"></div>
<div class="a" style="left:858px;top:643px;font-size:11px;color:#fff;letter-spacing:-0.3px">100%</div>
</div></div>
</body></html>
